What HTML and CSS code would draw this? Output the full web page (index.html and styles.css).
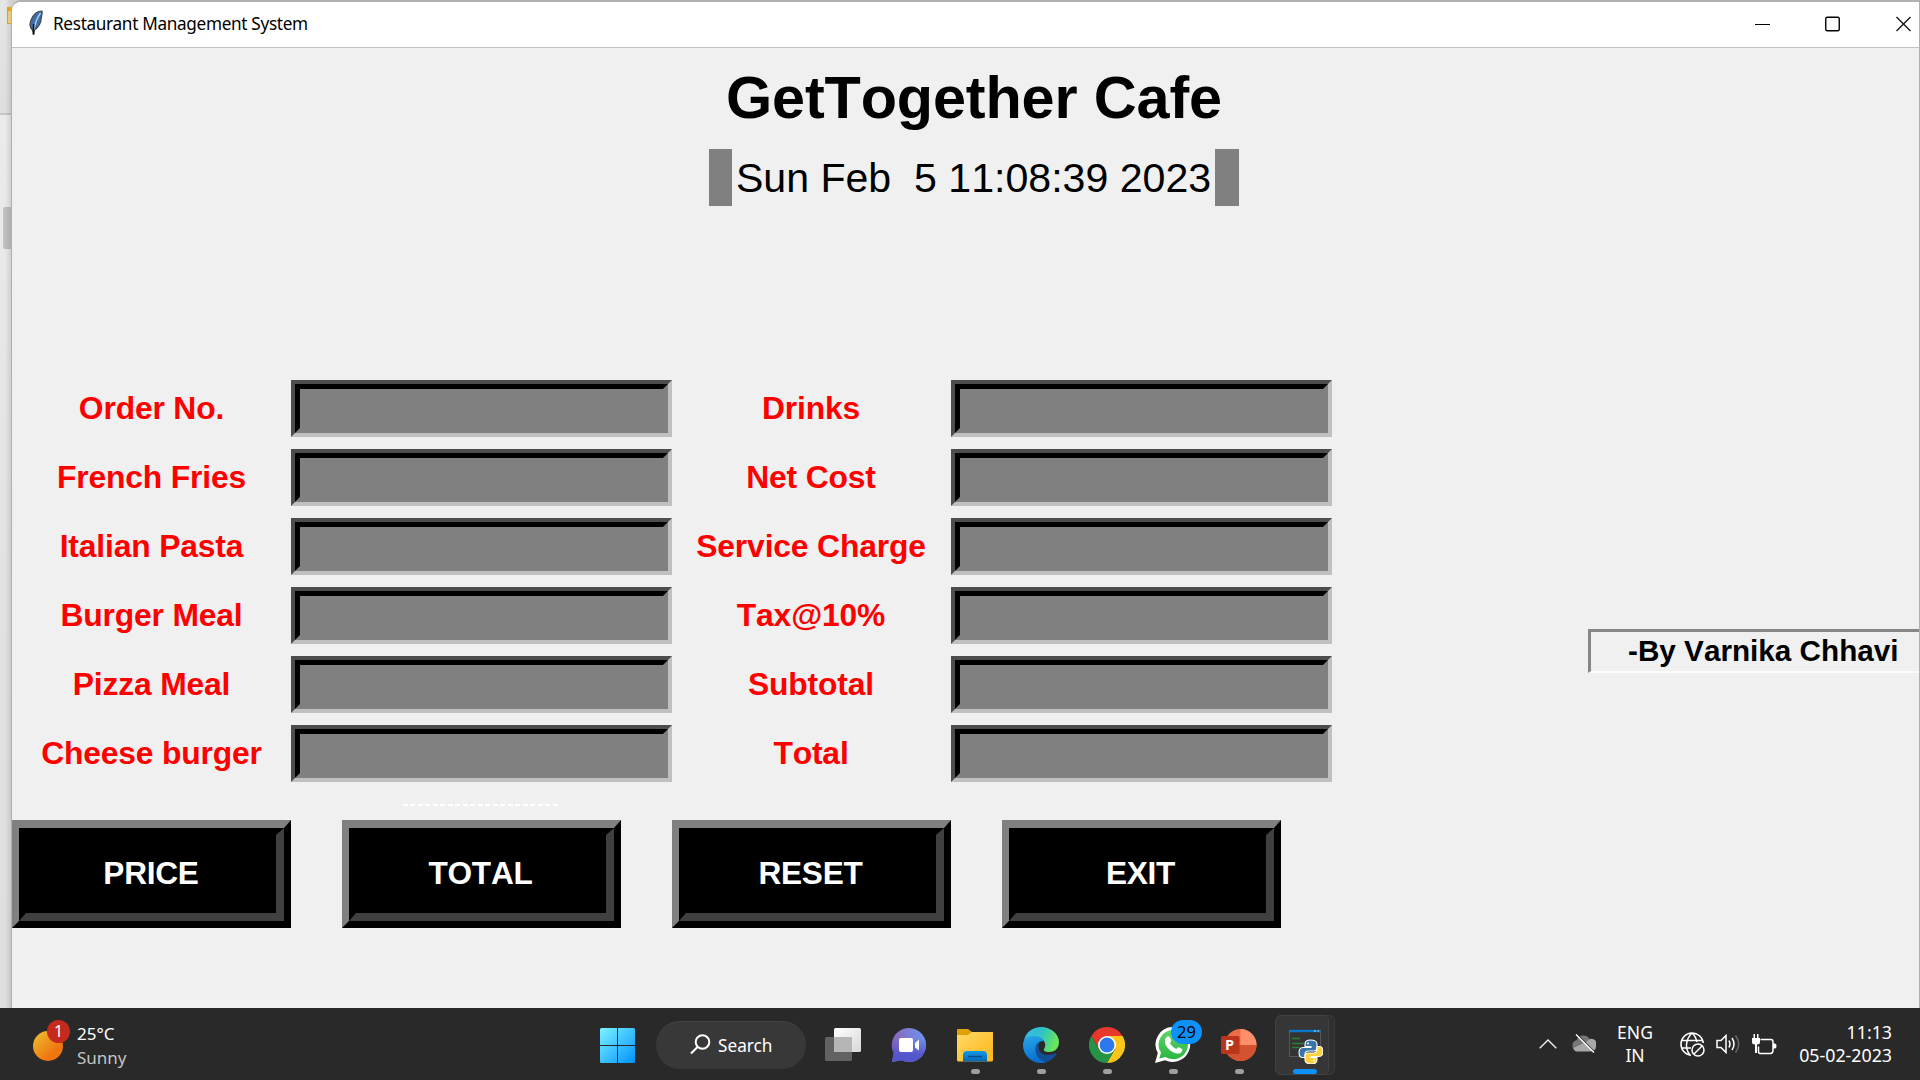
FILE: index.html
```html
<!DOCTYPE html>
<html lang="en">
<head>
<meta charset="utf-8">
<title>Restaurant Management System</title>
<link rel="stylesheet" href="styles.css">
</head>
<body>
<div class="desktop">
  <div class="behind"><span class="behind-folder"></span><span class="behind-thumb"></span></div>
  <main class="window">
    <header class="titlebar">
      <svg class="feather" width="14" height="26" viewBox="0 0 14 26">
        <path d="M13 1C8 1 4 5 2 10C0 15 1 18 3.500 20L4.500 25L5.500 20C9 18 12 13 12.500 7C12.700 5 13.500 3 13 1Z" fill="#3c6da8" stroke="#46494d" stroke-width="1.200"/>
        <path d="M11.500 3C8 8 6 13 5 20" fill="none" stroke="#a9cdf2" stroke-width="1.400"/>
        <path d="M4.600 14V24.500" fill="none" stroke="#111" stroke-width="1.500"/>
      </svg>
      <span class="window-title">Restaurant Management System</span>
      <div class="window-controls">
        <svg width="15" height="16" viewBox="0 0 15 16"><path d="M0 8.500H15" stroke="#000"/></svg>
        <svg width="15" height="16" viewBox="0 0 15 16"><rect x=".750" y="1.250" width="13.500" height="13.500" rx="1.500" fill="none" stroke="#000" stroke-width="1.400"/></svg>
        <svg width="15" height="16" viewBox="0 0 15 16"><path d="M.5 1L14.500 15M14.500 1L.5 15" stroke="#111" stroke-width="1.300"/></svg>
      </div>
    </header>
    <section class="heading">
      <h1>GetTogether Cafe</h1>
      <div class="datetime">Sun Feb&nbsp; 5 11:08:39 2023</div>
    </section>
    <section class="body-row">
      <div class="form">
        <label>Order No.</label><div class="entry"></div><label>Drinks</label><div class="entry"></div>
        <label>French Fries</label><div class="entry"></div><label>Net Cost</label><div class="entry"></div>
        <label>Italian Pasta</label><div class="entry"></div><label>Service Charge</label><div class="entry"></div>
        <label>Burger Meal</label><div class="entry"></div><label>Tax@10%</label><div class="entry"></div>
        <label>Pizza Meal</label><div class="entry"></div><label>Subtotal</label><div class="entry"></div>
        <label>Cheese burger</label><div class="entry"></div><label>Total</label><div class="entry"></div>
        <div class="tearoff"></div>
        <button><span>PRICE</span></button><button><span>TOTAL</span></button><button><span>RESET</span></button><button><span>EXIT</span></button>
      </div>
      <div class="author">-By Varnika Chhavi</div>
    </section>
  </main>
</div>
<footer class="taskbar">
  <div class="weather">
    <div class="sun"><span class="alert">1</span></div>
    <div class="weather-text"><div>25°C</div><div class="dim">Sunny</div></div>
  </div>
  <nav class="apps">
    <svg class="start" width="35" height="35" viewBox="0 0 35 35">
      <defs><linearGradient id="win" gradientUnits="userSpaceOnUse" x1="0" y1="0" x2="35" y2="35"><stop offset="0" stop-color="#7df3ff"/><stop offset="1" stop-color="#0092ff"/></linearGradient></defs>
      <path fill="url(#win)" d="M1.500 0H17V17H0V1.500Q0 0 1.500 0ZM18 0H33.500Q35 0 35 1.500V17H18ZM0 18H17V35H1.500Q0 35 0 33.500ZM18 18H35V33.500Q35 35 33.500 35H18Z"/>
    </svg>
    <div class="search">
      <svg width="21" height="21" viewBox="0 0 21 21"><circle cx="12.500" cy="8" r="6.800" fill="none" stroke="#fff" stroke-width="2"/><path d="M7.500 13L1 19.500" stroke="#fff" stroke-width="2.200"/></svg>
      <span>Search</span>
    </div>
    <div class="app">
      <svg width="36" height="36" viewBox="0 0 36 36">
        <defs><linearGradient id="tv" x2="1" y2="1"><stop stop-color="#fff"/><stop offset="1" stop-color="#d8d8d8"/></linearGradient></defs>
        <rect y="10" width="27" height="24" rx="1.500" fill="#626262"/><rect x="9" y="1" width="27" height="24" rx="1.500" fill="url(#tv)"/><path d="M9 10H27V25H10.500Q9 25 9 23.500Z" fill="#b6b6b6"/>
      </svg>
    </div>
    <div class="app">
      <svg width="36" height="36" viewBox="0 0 36 36">
        <defs><linearGradient id="chat" x1="0" y1=".3" x2="1" y2=".2"><stop stop-color="#8a63b5"/><stop offset=".5" stop-color="#7b7fd6"/><stop offset="1" stop-color="#6d93ee"/></linearGradient><linearGradient id="chat2" x2="0" y2="1"><stop offset=".3" stop-color="#5558d0" stop-opacity="0"/><stop offset=".8" stop-color="#5457cb"/></linearGradient></defs>
        <path d="M18 1A17 17 0 1 1 10.500 33.200L1 35L2.800 26A17 17 0 0 1 18 1Z" fill="url(#chat)"/><path d="M18 1A17 17 0 1 1 10.500 33.200L1 35L2.800 26A17 17 0 0 1 18 1Z" fill="url(#chat2)"/>
        <rect x="8" y="11" width="14" height="14" rx="2" fill="#fff"/><path d="M24 16L28 12.500V23.500L24 20.500Z" fill="#fff"/>
      </svg>
    </div>
    <div class="app running">
      <svg width="36" height="36" viewBox="0 0 36 36">
        <defs><linearGradient id="fold" x2="1" y2="1"><stop stop-color="#ffd968"/><stop offset="1" stop-color="#fdb514"/></linearGradient><linearGradient id="foldb" x2="0" y2="1"><stop stop-color="#1499e6"/><stop offset="1" stop-color="#0667b4"/></linearGradient></defs>
        <path d="M0 3Q0 2 1 2H11L15 5H35Q36 5 36 6V14H0Z" fill="#e2a008"/><path d="M0 8H11L15 5H35Q36 5 36 6V33Q36 34.500 34.500 34.500H1.500Q0 34.500 0 33Z" fill="url(#fold)"/>
        <path d="M6 34.500V28Q6 24 10 24H26Q30 24 30 28V34.500Z" fill="url(#foldb)"/><path d="M11 29.500H25" stroke="#064f91" stroke-width="1.500"/>
      </svg>
    </div>
    <div class="app running">
      <svg width="36" height="36" viewBox="0 0 36 36">
        <defs><linearGradient id="e1" x2="1" y2=".3"><stop stop-color="#3ab5ee"/><stop offset=".55" stop-color="#2fc3c5"/><stop offset="1" stop-color="#68e55c"/></linearGradient><linearGradient id="e2" x2=".3" y2="1"><stop stop-color="#29a8ea"/><stop offset="1" stop-color="#076fd0"/></linearGradient></defs>
        <path d="M1 13C3 5 10 0 18 0C28 0 36 7 36 15C36 22 31 25 26 25C22 25 20 23.500 21 22C24 18 22 11 13 10C7 9.500 3 11 1 13Z" fill="url(#e1)"/>
        <path d="M0 18C0 11 6 8.500 12 9C17 9.400 20 12 20.500 14C16 14 12 18 13 24C14 31 21 36 25 34.500C23 35.500 20 36 18 36C8 36 0 28 0 18Z" fill="url(#e2)"/>
        <path d="M19 13.500C14 15 11 20 13 26C15 33 22 36.500 26 34C29 32.500 32 30 33.500 27C33.500 26 32.500 26 32 26.500C24 30 15 27 15.500 19C15.700 16 17.500 14 19 13.500Z" fill="#114f98"/>
      </svg>
    </div>
    <div class="app running">
      <svg width="36" height="36" viewBox="0 0 36 36">
        <path d="M2.400 9A18 18 0 0 1 33.600 9H18L10.200 22.500Z" fill="#e8382b"/><path d="M33.600 9A18 18 0 0 1 18 36L25.800 22.500L18 9Z" fill="#fdc51c"/><path d="M18 36A18 18 0 0 1 2.400 9L10.200 22.500H25.800Z" fill="#259447"/>
        <circle cx="18" cy="18" r="9" fill="#fff"/><circle cx="18" cy="18" r="7.400" fill="#2b79ed"/>
      </svg>
    </div>
    <div class="app running">
      <svg width="36" height="36" viewBox="0 0 36 36">
        <defs><linearGradient id="wa" x2="0" y2="1"><stop stop-color="#62d36b"/><stop offset="1" stop-color="#2bb641"/></linearGradient></defs>
        <path d="M18.500 0A17.500 17.500 0 1 1 10 33.200L0 36L2.800 26A17.500 17.500 0 0 1 18.500 0Z" fill="#fff"/><path d="M18.500 3A14.600 14.600 0 1 1 10.500 29.900L4.300 31.500L6 25.500A14.600 14.600 0 0 1 18.500 3Z" fill="url(#wa)"/>
        <path d="M12.500 9.500C13.500 9 14.500 9.500 15 10.500L16.300 13.500C16.500 14.300 15.500 15.500 15 16C16.500 19 19 21 21.500 22C22.500 21 23 20 24 20.300L27 22C28 22.600 27 25 25.500 26C21 28 15 24 12 20C8.500 15 10 10.500 12.500 9.500Z" fill="#fff"/>
      </svg>
      <span class="count">29</span>
    </div>
    <div class="app running">
      <svg width="36" height="36" viewBox="0 0 36 36">
        <circle cx="19.500" cy="18" r="16" fill="#ed6c47"/><path d="M19.500 2A16 16 0 0 1 35.500 18H19.500Z" fill="#ff8f6b"/><path d="M3.500 18H35.500A16 16 0 0 1 3.500 18Z" fill="#d35230"/>
        <rect y="9" width="18.500" height="18" rx="1.500" fill="#b9351b"/><text class="ppt-letter" x="4" y="23">P</text>
      </svg>
    </div>
    <div class="app running active">
      <div class="tile">
        <svg width="36" height="36" viewBox="0 0 36 36">
          <rect x="2.500" y="2.500" width="31" height="26" fill="#343434" stroke="#575757"/><path d="M2 3H33.500" stroke="#0877cc" stroke-width="2.400"/><path d="M27 3H29M30.500 3H32" stroke="#cde" stroke-width="1.200"/>
          <path d="M5 10.500H13M5 15.500H17M5 19.500H13" stroke="#2d7d32" stroke-width="1.300"/>
          <g transform="translate(12 12)"><path d="M11.500 0C7 0 6 1.500 6 4V6.500H12V7.500H4C1 7.500 0 10 0 12.500S1 17.500 3.500 17.500H6V14.500C6 12.500 7.500 11 9.500 11H15C17 11 18 9.500 18 8V4C18 1 15 0 11.500 0Z" fill="#3975a8" stroke="#fff" stroke-width="1.100"/><path transform="rotate(180 12 12)" d="M11.500 0C7 0 6 1.500 6 4V6.500H12V7.500H4C1 7.500 0 10 0 12.500S1 17.500 3.500 17.500H6V14.500C6 12.500 7.500 11 9.500 11H15C17 11 18 9.500 18 8V4C18 1 15 0 11.500 0Z" fill="#fbd23d" stroke="#fff" stroke-width="1.100"/><circle cx="9" cy="3.500" r="1" fill="#fff"/><circle cx="15" cy="20.500" r="1" fill="#fff"/></g>
        </svg>
      </div>
    </div>
  </nav>
  <div class="tray">
    <svg width="18" height="10" viewBox="0 0 18 10"><path d="M.7 9.300L9 1L17.300 9.300" fill="none" stroke="#eee" stroke-width="1.400"/></svg>
    <svg class="cloud" width="24" height="20" viewBox="0 0 24 20"><path d="M5.500 17A5.500 5.500 0 0 1 4.500 6.200A7.300 7.300 0 0 1 18.500 7.200A5 5 0 0 1 19 17Z" fill="#777"/><path d="M5 17.500A4 4 0 0 1 1.500 14L15 7.500A5 5 0 0 1 24 12.500A5 5 0 0 1 19 17.500Z" fill="#a8a8a8"/><path d="M5 .5L23 18.500" stroke="#292929" stroke-width="1.600"/><path d="M4 .5L22 18.500" stroke="#fff" stroke-width="1.400"/></svg>
    <div class="lang">ENG<br>IN</div>
    <svg class="globe" width="25" height="25" viewBox="0 0 25 25" fill="none" stroke="#fff" stroke-width="1.500"><path d="M23.300 11A11.200 11.200 0 1 0 11 23.300M1.700 8.500H22.500M1.700 16H11M12 1C5 8 5 17 10 23M12 1C15.500 4 16.500 8 16.800 10"/><circle cx="18" cy="18" r="6"/><path d="M14 22L22 14"/></svg>
    <svg class="speaker" width="25" height="20" viewBox="0 0 25 20" fill="none" stroke="#fff" stroke-width="1.500"><path d="M1 6.500H5L10 1.500V18.500L5 13.500H1Z"/><path d="M13 6.500Q15 10 13 13.500M16 4Q20 10 16 16"/><path d="M19.500 1.500Q26 10 19.500 18.500" stroke="#696969"/></svg>
    <svg class="battery" width="25" height="21" viewBox="0 0 25 21"><path d="M8.500 5.500H19Q21 5.500 21 8V16Q21 19.500 18.500 19.500H8Q6.500 19.500 6.500 17.500V12.500" fill="none" stroke="#fff" stroke-width="1.500"/><path d="M21 9.500H23Q24.500 9.500 24.500 12T23 14.500H21Z" fill="#fff"/><path d="M0 4H1.500V0H3V4H5V0H6.500V4H8V8Q8 10.500 5 10.500V19H3V10.500Q0 10.500 0 8Z" fill="#fff"/></svg>
    <div class="clock"><div>11:13</div><div>05-02-2023</div></div>
  </div>
</footer>
</body>
</html>
```
FILE: styles.css
```css
* { box-sizing: border-box; }
body {
  margin: 0;
  width: 1920px;
  height: 1080px;
  overflow: hidden;
  display: grid;
  grid-template-rows: 1008px 72px;
  font-family: "Liberation Sans", Arial, sans-serif;
  font-kerning: none;
  background: #f0f0f0;
}
svg { display: block; flex: none; }

/* desktop and the window lying under the main one */
.desktop { position: relative; padding-left: 11px; background: #b0b0b0; }
.behind {
  position: absolute;
  inset: 0 auto 0 0;
  width: 24px;
  background:
    linear-gradient(90deg, transparent 5px, rgba(0, 0, 0, .1) 11px),
    linear-gradient(#e6e6e6, #dedede 113px, #c6c6c6 113px, #c6c6c6 115px, #ebebeb 115px, #e2e2e2 600px, #dedede);
}
.behind-folder { position: absolute; left: 7px; top: 7px; width: 12px; height: 17px; background: #e8ca7c; border: 1px solid #dfa427; border-top: 4px solid #e5a410; }
.behind-thumb { position: absolute; left: 3px; top: 207px; width: 16px; height: 42px; border-radius: 2px; background: linear-gradient(90deg, #c4c4c4, #ababab 9px); }

.window {
  position: relative;
  height: 1008px;
  background: #f0f0f0;
  border: solid #b0b0b0;
  border-width: 2px 1px 0 1px;
  border-radius: 10px 0 0 0;
  overflow: hidden;
}
.titlebar { height: 46px; display: flex; align-items: center; background: #fff; border-bottom: 1px solid #c2c2c2; padding: 0 8px 0 17px; }
.feather { margin-top: -4px; }
.window-title { margin-left: 10px; font: 17.200px/26px "Noto Sans", sans-serif; letter-spacing: -.330px; color: #000; margin-top: -1px; white-space: nowrap; }
.window-controls { margin-left: auto; margin-top: -1px; display: flex; gap: 55px; }
.window-controls svg:last-child { margin-left: 1px; }

.heading { height: 326px; padding: 16px 0 0 17px; display: flex; flex-direction: column; align-items: center; }
h1 { margin: 0 0 16px; font-size: 59.400px; line-height: 68px; font-weight: bold; letter-spacing: -.150px; }
.heading h1 { padding-bottom: 1px; }
.datetime { height: 57px; border: solid #808080; border-width: 0 24px 0 23px; padding: 1px 4px 0; font-size: 41.100px; line-height: 57px; white-space: nowrap; }

.body-row { display: flex; align-items: flex-start; justify-content: space-between; }
.form {
  display: grid;
  grid-template-columns: 279px 380px 280px 380px;
  grid-template-rows: repeat(6, 69px) 31px 109px;
  justify-items: center;
  align-items: center;
}
.form label { font-size: 31.800px; font-weight: bold; letter-spacing: -.150px; color: #f00; white-space: nowrap; }
.entry {
  width: 381px;
  justify-self: start;
  height: 57px;
  border: 4px solid;
  border-color: #4d4d4d #c0c0c0 #c0c0c0 #4d4d4d;
  background: #808080;
  display: flex;
}
.entry::before { content: ""; flex: 1; border: 5px solid; border-color: #000 #808080 #808080 #000; }
.tearoff {
  grid-column: 2;
  grid-row: 7;
  width: 156px;
  height: 2px;
  background: repeating-linear-gradient(90deg, #fff 0 5px, transparent 5px 7.500px);
  margin-top: 3px;
}
.form button {
  grid-row: 8;
  width: 279px;
  height: 108px;
  display: flex;
  padding: 0;
  border: solid;
  border-color: #808080 #000 #000 #808080;
  border-width: 8px 7px 7px 7px;
  background: #000;
  color: #fff;
  font: bold 31.600px "Liberation Sans", Arial, sans-serif;
  font-kerning: none;
  letter-spacing: -.250px;
}
.form button span {
  align-self: stretch;
  flex: 1;
  border: solid;
  border-width: 7px 8px 8px 7px;
  border-color: #000 #404040 #404040 #000;
  display: grid;
  place-items: center;
  padding-bottom: 1px;
}
.author {
  margin-top: 255px;
  width: 331px;
  height: 44px;
  border: solid;
  border-width: 3px 0 2px 3px;
  border-color: #868686 transparent #fbfbfb #868686;
  padding-left: 37px;
  font-size: 29.700px;
  font-weight: bold;
  line-height: 38px;
  white-space: nowrap;
}

/* taskbar */
.taskbar { position: relative; display: grid; grid-template-columns: 600px 738px 1fr; align-items: center; background: #292929; color: #fff; font: 18px/23px "Noto Sans", sans-serif; }
.weather { display: flex; padding-left: 33px; gap: 14px; align-items: center; }
.sun { position: relative; width: 30px; height: 30px; border-radius: 50%; background: linear-gradient(135deg, #ecc433, #f0750f 70%); margin-top: 3px; }
.alert { position: absolute; left: 14px; top: -11px; width: 23px; height: 23px; border-radius: 50%; background: #c42b1c; font-size: 16px; line-height: 23px; text-align: center; }
.weather-text { font-size: 17px; line-height: 24px; margin-top: 3px; }
.dim { color: #c4c4c4; }
.apps { display: flex; align-items: center; height: 72px; }
.start { margin-top: 3px; }
.search { width: 150px; height: 48px; border-radius: 24px; background: #383838; border-top: 1px solid #434343; margin: 2px 4px 0 21px; padding-left: 34px; display: flex; align-items: center; gap: 7px; font-size: 17.200px; }
.search svg { margin-top: -2px; }
.app { position: relative; width: 66px; height: 72px; padding: 19px 15px 0; }
.running::after { content: ""; position: absolute; left: 29px; top: 61px; width: 9px; height: 5px; border-radius: 3px; background: #9f9f9f; }
.active::after { left: 21px; width: 24px; background: #0c91fa; }
.count { position: absolute; left: 31px; top: 12px; width: 31px; height: 24px; border-radius: 12px; background: #0c91fa; color: #000; font-size: 16.500px; line-height: 24px; text-align: center; }
.ppt-letter { font: bold 14.500px "Open Sans", sans-serif; fill: #fff; }
.active { padding: 7px 0 0 3px; }
.tile { width: 54px; height: 60px; border-radius: 6px; background: #363636; border: 1px solid #424242; padding: 12px 0 0 11px; box-shadow: 6px 0 0 -1px #303030, 6px 0 0 0 #3b3b3b; }
.tray { display: flex; align-items: center; padding: 0 28px 0 201px; height: 72px; }
.cloud { margin-left: 15px; }
.lang { width: 36px; margin-left: 21px; text-align: center; font-size: 17.500px; }
.globe { margin-left: 27px; }
.speaker { margin-left: 11px; }
.battery { margin-left: 11px; }
.clock { margin-left: auto; text-align: right; font-size: 17.800px; }
```
